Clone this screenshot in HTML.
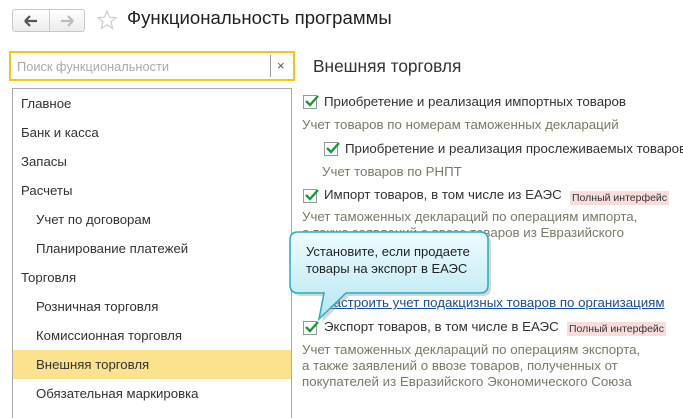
<!DOCTYPE html>
<html><head><meta charset="utf-8"><style>
*{margin:0;padding:0;box-sizing:border-box}
body{width:683px;height:406px;overflow:hidden;background:#fff;font-family:"Liberation Sans",Arial,sans-serif;position:relative;color:#333}
.a{position:absolute;white-space:nowrap}
.nav{position:absolute;left:12px;top:9px;width:73px;height:23px;border:1px solid #c8c8c8;border-radius:3px;background:linear-gradient(#fff,#ececec)}
.nav .sep{position:absolute;left:36px;top:0;width:1px;height:21px;background:#ccc}
.list{position:absolute;left:12px;top:88px;width:280px;height:330px;border:1px solid #aaa;border-bottom:none}
.li{position:absolute;font-size:13.2px;color:#333}
.hl{position:absolute;left:13px;top:350px;width:278px;height:29px;background:#fbe28f}
.cb{position:absolute;width:14px;height:14px;border:1px solid #999;background:#fff}
.cb svg{position:absolute;left:0;top:-3px}
.t{font-size:13.3px;color:#333}
.d{font-size:13.3px;color:#7a7a6a}
.pi{position:absolute;font-size:10.5px;background:#fbdcdc;color:#333;padding:0 2px;line-height:14px}
</style></head><body>
<div class="nav"><div class="sep"></div>
<svg class="a" style="left:11px;top:5px" width="14" height="12"><path d="M1 6H13M1 6L6 1M1 6L6 11" stroke="#555" stroke-width="2.2" fill="none"/></svg>
<svg class="a" style="left:47px;top:5px" width="14" height="12"><path d="M13 6H1M13 6L8 1M13 6L8 11" stroke="#bbb" stroke-width="2.2" fill="none"/></svg>
</div>
<svg class="a" style="left:97px;top:10px" width="20" height="20"><path d="M10 1L12.6 7.2L19 7.6L14 11.8L15.6 18.4L10 14.8L4.4 18.4L6 11.8L1 7.6L7.4 7.2Z" fill="none" stroke="#ccc" stroke-width="1.2"/></svg>
<div class="a" style="left:127px;top:7px;font-size:18.6px;color:#222">Функциональность программы</div>
<div class="a" style="left:9px;top:51px;width:286px;height:30px;border:2px solid #f5c518;background:#fff"></div>
<div class="a" style="left:17px;top:59px;font-size:12.8px;color:#aaa">Поиск функциональности</div>
<div class="a" style="left:270px;top:55px;width:1px;height:22px;background:#999"></div>
<div class="a" style="left:277px;top:58px;font-size:13px;color:#555">×</div>
<div class="list"></div>
<div class="hl"></div>
<div class="li" style="left:21px;top:96px">Главное</div>
<div class="li" style="left:21px;top:125px">Банк и касса</div>
<div class="li" style="left:21px;top:154px">Запасы</div>
<div class="li" style="left:21px;top:183px">Расчеты</div>
<div class="li" style="left:36px;top:212px">Учет по договорам</div>
<div class="li" style="left:36px;top:241px">Планирование платежей</div>
<div class="li" style="left:21px;top:270px">Торговля</div>
<div class="li" style="left:36px;top:299px">Розничная торговля</div>
<div class="li" style="left:36px;top:328px">Комиссионная торговля</div>
<div class="li" style="left:36px;top:357px">Внешняя торговля</div>
<div class="li" style="left:36px;top:386px">Обязательная маркировка</div>
<div class="a" style="left:313px;top:56px;font-size:17.3px;color:#333">Внешняя торговля</div>

<div class="cb" style="left:303px;top:95px"><svg width="16" height="16"><path d="M2 8L6 12L14 3" stroke="#1a9a3a" stroke-width="2.4" fill="none"/></svg></div>
<div class="a t" style="left:324px;top:94px">Приобретение и реализация импортных товаров</div>
<div class="a d" style="left:302px;top:117px">Учет товаров по номерам таможенных деклараций</div>
<div class="cb" style="left:324px;top:142px"><svg width="16" height="16"><path d="M2 8L6 12L14 3" stroke="#1a9a3a" stroke-width="2.4" fill="none"/></svg></div>
<div class="a t" style="left:345px;top:141px">Приобретение и реализация прослеживаемых товаров</div>
<div class="a d" style="left:322px;top:164px">Учет товаров по РНПТ</div>
<div class="cb" style="left:303px;top:189px"><svg width="16" height="16"><path d="M2 8L6 12L14 3" stroke="#1a9a3a" stroke-width="2.4" fill="none"/></svg></div>
<div class="a t" style="left:324px;top:187px">Импорт товаров, в том числе из ЕАЭС</div>
<div class="pi" style="left:570px;top:191px">Полный интерфейс</div>
<div class="a d" style="left:302px;top:209px">Учет таможенных деклараций по операциям импорта,</div>
<div class="a d" style="left:302px;top:225px">а также заявлений о ввозе товаров из Евразийского</div>
<div class="a t" style="left:302px;top:266px">Учет подакцизных товаров</div>
<div class="a" style="left:324px;top:295px;font-size:13.3px;color:#1a4fa0;text-decoration:underline">Настроить учет подакцизных товаров по организациям</div>
<div class="cb" style="left:303px;top:321px"><svg width="16" height="16"><path d="M2 8L6 12L14 3" stroke="#1a9a3a" stroke-width="2.4" fill="none"/></svg></div>
<div class="a t" style="left:324px;top:319px">Экспорт товаров, в том числе в ЕАЭС</div>
<div class="pi" style="left:567px;top:322px">Полный интерфейс</div>
<div class="a d" style="left:302px;top:342px">Учет таможенных деклараций по операциям экспорта,</div>
<div class="a d" style="left:302px;top:358px">а также заявлений о ввозе товаров, полученных от</div>
<div class="a d" style="left:302px;top:374px">покупателей из Евразийского Экономического Союза</div>

<svg class="a" style="left:286px;top:228px" width="210" height="96">
<defs><linearGradient id="g" x1="0" y1="0" x2="0" y2="1"><stop offset="0" stop-color="#eefcff"/><stop offset="1" stop-color="#b5e6f2"/></linearGradient></defs>
<path d="M12 4H194Q202 4 202 12V57Q202 65 194 65H60L33 91L38 65H12Q4 65 4 57V12Q4 4 12 4Z" fill="#8a8a8a" opacity=".35" transform="translate(3,3)"/>
<path d="M12 4H194Q202 4 202 12V57Q202 65 194 65H60L33 91L38 65H12Q4 65 4 57V12Q4 4 12 4Z" fill="url(#g)" stroke="#2ca8c6" stroke-width="1.5"/>
</svg>
<div class="a" style="left:306px;top:243px;font-size:13px;color:#222;line-height:17px">Установите, если продаете<br>товары на экспорт в ЕАЭС</div>
</body></html>
